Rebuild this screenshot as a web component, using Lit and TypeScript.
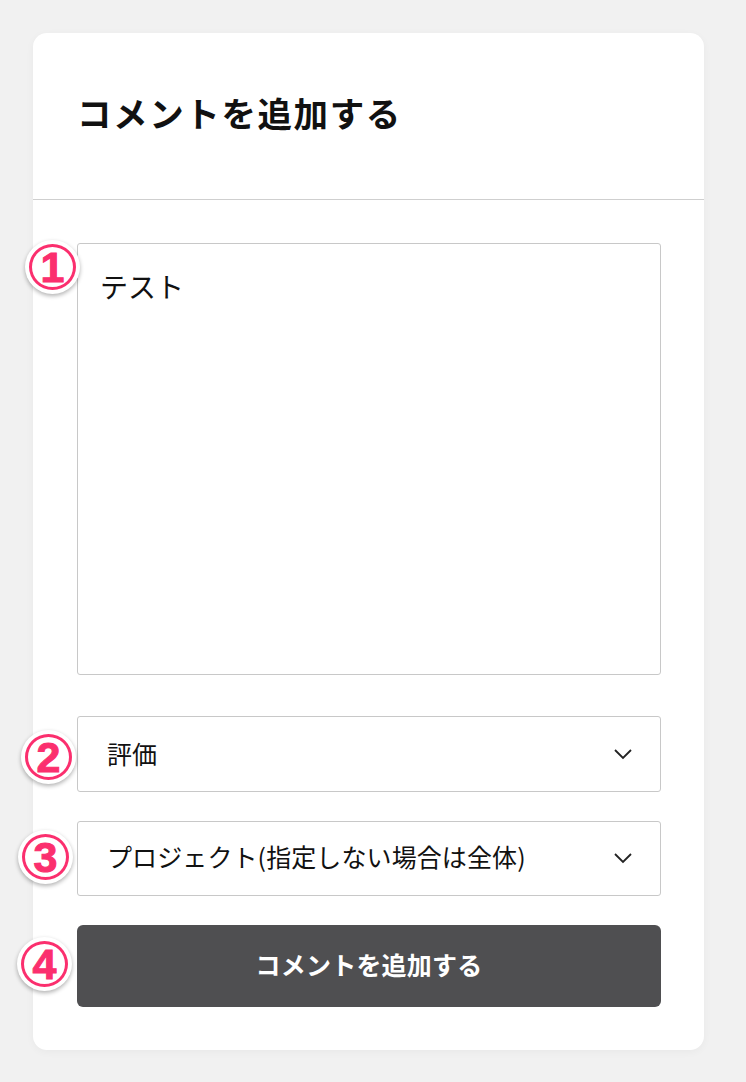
import { LitElement, html, css } from "lit";
import { customElement } from "lit/decorators.js";

const chevron = html`<svg class="chev" width="18" height="11" viewBox="0 0 18 11" fill="none" stroke="#222" stroke-width="1.8"><path d="M1 1l8 8 8-8"/></svg>`;

@customElement("app-root")
export class AppRoot extends LitElement {
  static styles = css`
    :host {
      display: block;
      height: 1082px;
      box-sizing: border-box;
      padding: 33px 42px 32px 33px;
      background: #f1f1f1;
      font-family: "Noto Sans CJK JP", "Liberation Sans", sans-serif;
      color: #111;
      overflow: hidden;
    }
    .card {
      position: relative;
      height: 1017px;
      background: #fff;
      border-radius: 14px;
      box-shadow: 0 2px 8px rgba(0, 0, 0, 0.04);
      display: flex;
      flex-direction: column;
    }
    .head {
      height: 167px;
      box-sizing: border-box;
      border-bottom: 1px solid #cfcfcf;
      padding-left: 44px;
      display: flex;
      align-items: center;
    }
    h1 {
      margin: 0 0 7px;
      font-size: 34.5px;
      font-weight: 700;
      letter-spacing: 1.6px;
      line-height: 1;
      color: #111;
    }
    .body {
      padding: 43px 43px 0 44px;
      display: flex;
      flex-direction: column;
    }
    .area {
      height: 432px;
      box-sizing: border-box;
      border: 1px solid #c8c8c8;
      border-radius: 3px;
      padding: 23px 22px;
      font-size: 28px;
      line-height: 38px;
      color: #111;
    }
    .select {
      box-sizing: border-box;
      border: 1px solid #c8c8c8;
      border-radius: 3px;
      padding: 0 28px 0 29px;
      display: flex;
      align-items: center;
      justify-content: space-between;
      font-size: 25px;
      letter-spacing: 0.1px;
      color: #111;
    }
    .select span { margin-bottom: 2px; }
    .s2 span { margin-bottom: 5px; }
    .s1 { height: 76px; margin-top: 41px; }
    .s2 { height: 75px; margin-top: 29px; }
    .btn {
      margin-top: 29px;
      height: 82px;
      box-sizing: border-box;
      padding-bottom: 4px;
      border-radius: 6px;
      background: #4f4f51;
      color: #fff;
      font-size: 25px;
      letter-spacing: 0.2px;
      font-weight: 700;
      display: flex;
      align-items: center;
      justify-content: center;
    }
    .badge {
      position: absolute;
      width: 55px;
      height: 54px;
      box-sizing: border-box;
      border-radius: 50%;
      background: #fff;
      box-shadow: 0 2px 4px rgba(0, 0, 0, 0.3);
      padding: 4px;
    }
    .ring {
      width: 100%;
      height: 100%;
      box-sizing: border-box;
      border: 3px solid #fb2f6e;
      border-radius: 50%;
      color: #fb2f6e;
      font: 700 43px/1 "Liberation Sans", sans-serif;
      -webkit-text-stroke: 1px #fb2f6e;
      display: flex;
      align-items: center;
      justify-content: center;
    }
    .b1 { left: -8px; top: 207px; }
    .b2 { left: -12px; top: 697px; }
    .b3 { left: -15px; top: 797px; }
    .b4 { left: -16px; top: 904px; }
  `;

  render() {
    return html`
      <div class="card">
        <div class="head"><h1>コメントを追加する</h1></div>
        <div class="body">
          <div class="area">テスト</div>
          <div class="select s1"><span>評価</span>${chevron}</div>
          <div class="select s2"><span>プロジェクト(指定しない場合は全体)</span>${chevron}</div>
          <div class="btn">コメントを追加する</div>
        </div>
        <div class="badge b1"><div class="ring">1</div></div>
        <div class="badge b2"><div class="ring">2</div></div>
        <div class="badge b3"><div class="ring">3</div></div>
        <div class="badge b4"><div class="ring">4</div></div>
      </div>
    `;
  }
}
